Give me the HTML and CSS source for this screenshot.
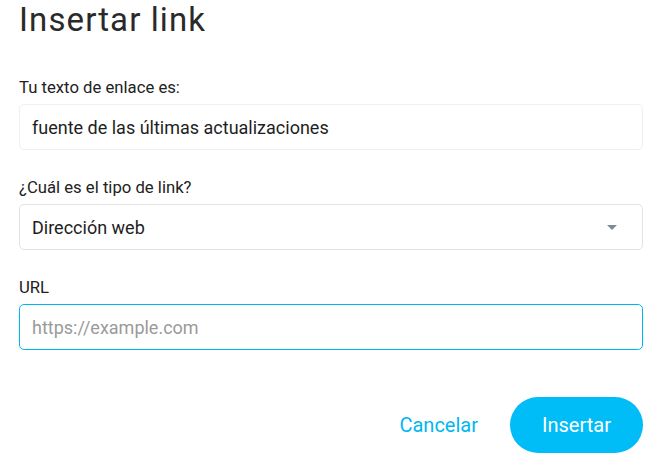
FILE: index.html
```html
<!DOCTYPE html>
<html lang="es">
<head>
<meta charset="utf-8">
<title>Insertar link</title>
<link rel="stylesheet" href="styles.css">
</head>
<body>
<div class="dialog">
  <h1 class="title">Insertar link</h1>
  <div class="field first">
    <label class="label">Tu texto de enlace es:</label>
    <div class="box box-static">fuente de las últimas actualizaciones</div>
  </div>
  <div class="field">
    <label class="label">¿Cuál es el tipo de link?</label>
    <div class="box box-select">
      <span>Dirección web</span>
      <svg class="caret" width="10" height="5" viewBox="0 0 10 5"><path d="M0 0H10L5 5Z" fill="#7b8c98"/></svg>
    </div>
  </div>
  <div class="field">
    <label class="label">URL</label>
    <div class="box box-focus"><span class="placeholder">https://example.com</span></div>
  </div>
  <div class="actions">
    <button class="btn-text">Cancelar</button>
    <button class="btn-primary">Insertar</button>
  </div>
</div>
</body>
</html>
```
FILE: styles.css
```css
html, body {
  margin: 0;
  padding: 0;
  background: #ffffff;
}
body {
  font-family: Roboto, "Liberation Sans", sans-serif;
  color: #212121;
}
.dialog {
  width: 624px;
  padding: 0 22px 0 19px;
  display: flex;
  flex-direction: column;
}
.title {
  margin: 0;
  font-size: 33px;
  line-height: 40px;
  font-weight: 400;
  letter-spacing: 1.1px;
  color: #2a2a2a;
}
.field {
  display: flex;
  flex-direction: column;
  gap: 6px;
  margin-top: 28px;
}
.field.first {
  margin-top: 38px;
}
.label {
  font-size: 16.7px;
  line-height: 20px;
  color: #222;
}
.box {
  box-sizing: border-box;
  height: 46px;
  border-radius: 5px;
  border: 1px solid #e3e3e3;
  padding: 0 12px;
  display: flex;
  align-items: center;
  font-size: 18px;
  color: #1e1e1e;
}
.box-static {
  border-color: #efefef;
}
.box-select {
  justify-content: space-between;
  padding-right: 25px;
}
.box-focus {
  border-color: #00b6f2;
}
.placeholder {
  color: #9a9a9a;
}
.actions {
  display: flex;
  justify-content: flex-end;
  align-items: center;
  gap: 32px;
  margin-top: 47px;
}
.btn-text {
  font-family: inherit;
  border: none;
  background: none;
  padding: 0;
  font-size: 20px;
  color: #00b7f1;
  cursor: pointer;
}
.btn-primary {
  font-family: inherit;
  border: none;
  background: #00bdf8;
  color: #ffffff;
  font-size: 20px;
  width: 133px;
  height: 56px;
  border-radius: 28px;
  cursor: pointer;
}
```
